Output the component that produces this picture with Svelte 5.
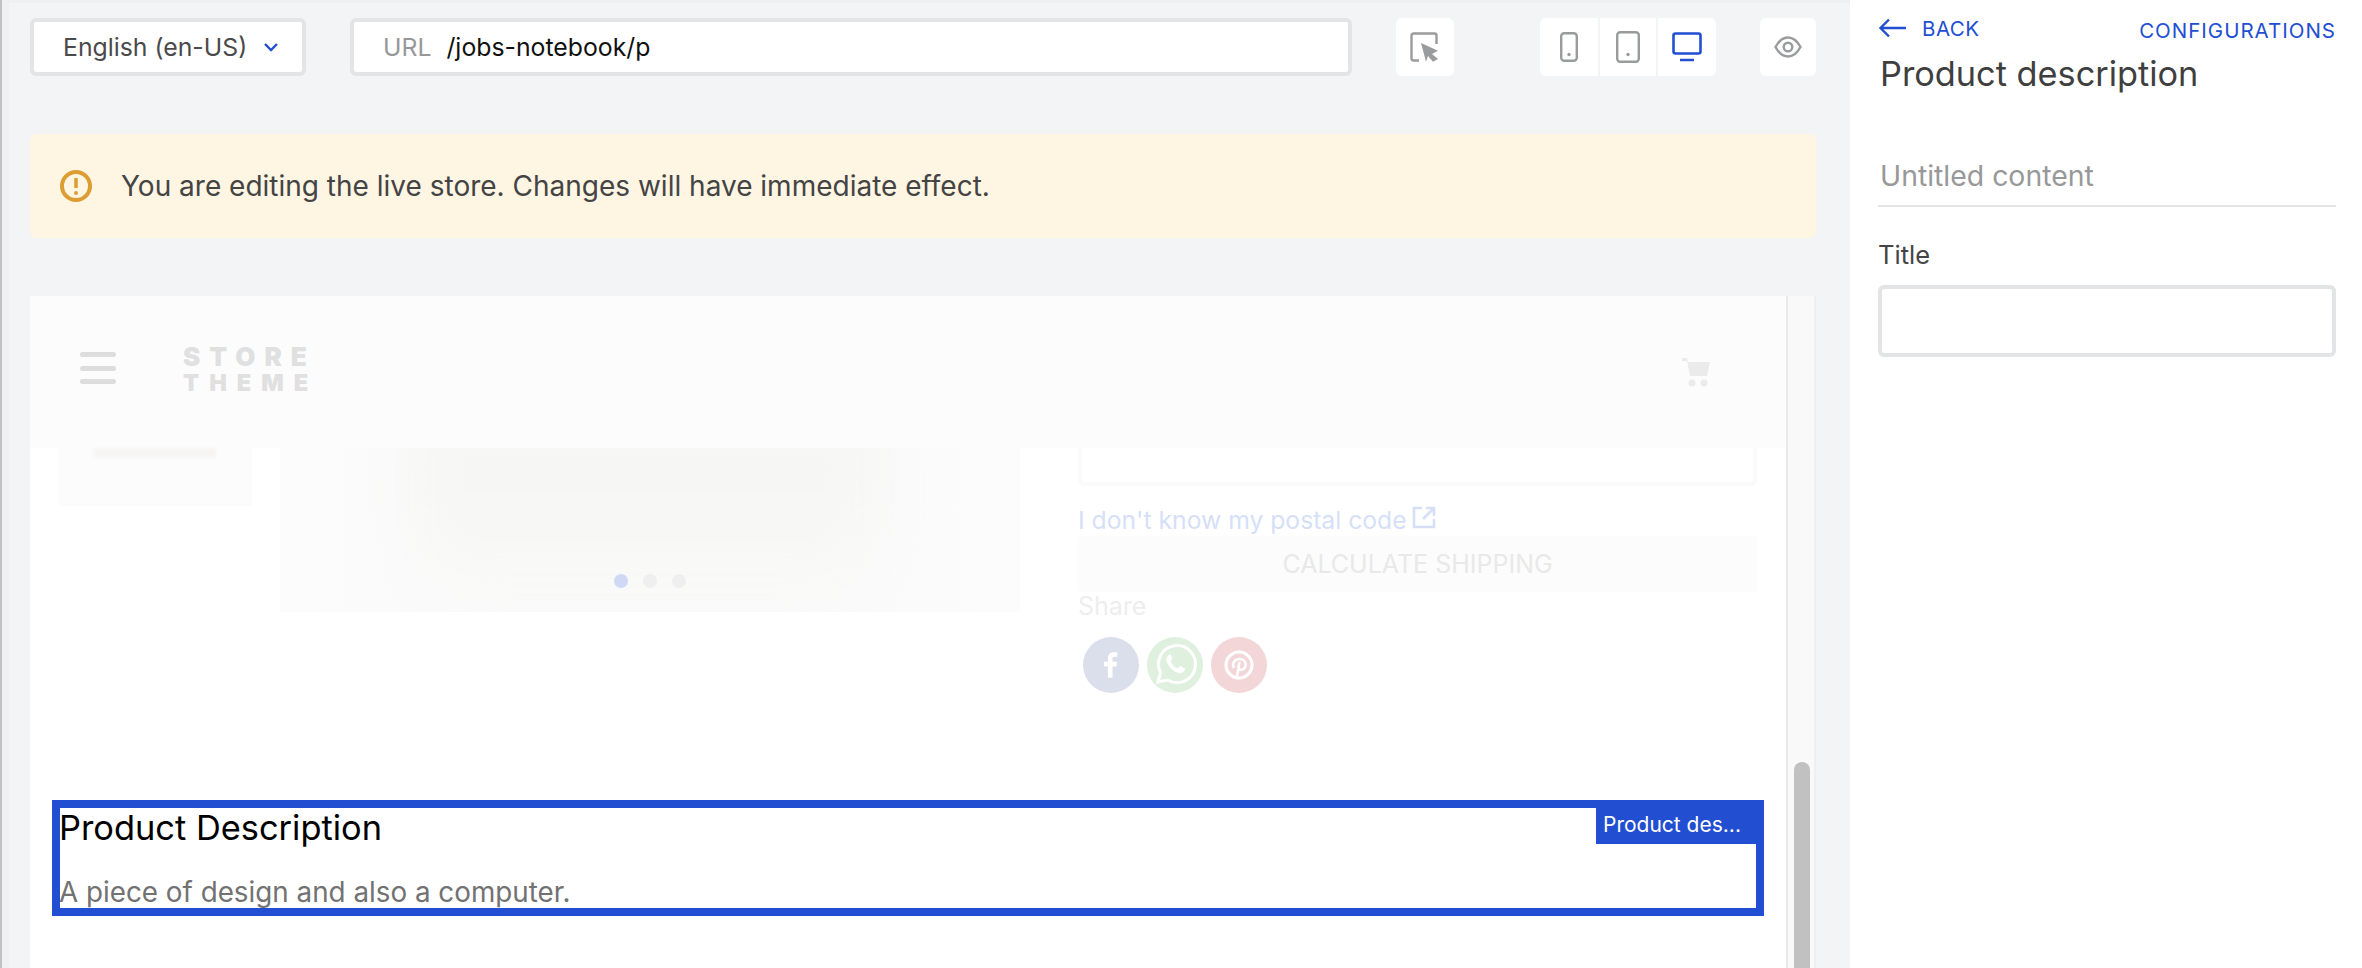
<script>
  const devices = ["phone", "tablet", "desktop"];
</script>

<div class="editor">
  <main class="workspace">
    <div class="toolbar">
      <div class="field lang">
        <span>English (en-US)</span>
        <svg width="16" height="10" viewBox="0 0 16 10"><path d="M2 2l6 6 6-6" fill="none" stroke="#224ed2" stroke-width="2.4" /></svg>
      </div>
      <div class="field url">
        <span class="url-label">URL</span>
        <span class="url-value">/jobs-notebook/p</span>
      </div>
      <button class="tool pick" aria-label="pick">
        <svg width="32" height="32" viewBox="0 0 32 32">
          <path d="M10 29.500H4.500a2 2 0 0 1-2-2V4.500a2 2 0 0 1 2-2h21a2 2 0 0 1 2 2V13" fill="none" stroke="#9a9b9c" stroke-width="2.400" />
          <path d="M12 12l17 7.700-6 3.300 6 5-5 2.700-5-5.700-2 5.700z" fill="#9a9b9c" />
        </svg>
      </button>
      <div class="device-group">
        {#each devices as d}
          <button class="tool device" aria-label={d}>
            {#if d === "phone"}
              <svg width="18" height="30" viewBox="0 0 18 30"><rect x="1.200" y="1.200" width="15.600" height="27.600" rx="3" fill="none" stroke="#9a9b9c" stroke-width="2.400" /><circle cx="9" cy="22.500" r="1.700" fill="#9a9b9c" /></svg>
            {:else if d === "tablet"}
              <svg width="24" height="32" viewBox="0 0 24 32"><rect x="1.200" y="1.200" width="21.600" height="29.600" rx="3" fill="none" stroke="#9a9b9c" stroke-width="2.400" /><circle cx="12" cy="23.500" r="1.700" fill="#9a9b9c" /></svg>
            {:else}
              <svg width="30" height="30" viewBox="0 0 30 30"><rect x="1.500" y="1.500" width="27" height="20" rx="2" fill="none" stroke="#224ed2" stroke-width="2.600" /><path d="M8 28h14" stroke="#224ed2" stroke-width="2.600" /></svg>
            {/if}
          </button>
        {/each}
      </div>
      <button class="tool eye" aria-label="preview">
        <svg width="28" height="22" viewBox="0 0 28 22"><path d="M1.500 11C5 4.500 9 1.500 14 1.500S23 4.500 26.500 11C23 17.500 19 20.500 14 20.500S5 17.500 1.500 11z" fill="none" stroke="#9a9b9c" stroke-width="2.400" /><circle cx="14" cy="11" r="4.300" fill="none" stroke="#9a9b9c" stroke-width="2.400" /></svg>
      </button>
    </div>

    <div class="warning">
      <svg width="32" height="32" viewBox="0 0 32 32"><circle cx="16" cy="16" r="14" fill="none" stroke="#dd9d33" stroke-width="4" /><path d="M16 8v10" stroke="#dd9d33" stroke-width="3.500" /><circle cx="16" cy="23" r="2" fill="#dd9d33" /></svg>
      <span>You are editing the live store. Changes will have immediate effect.</span>
    </div>

    <div class="frame">
      <div class="page">
        <header class="store-header">
          <div class="burger"><i></i><i></i><i></i></div>
          <div class="logo"><span>STORE</span><span class="theme">THEME</span></div>
          <svg class="cart" width="28" height="30" viewBox="0 0 28 30"><path d="M0 1h5l1 4h22l-3 14H8L5 4H0z" fill="#ebebeb" /><circle cx="10" cy="26" r="3.500" fill="#ebebeb" /><circle cx="22" cy="26" r="3.500" fill="#ebebeb" /></svg>
        </header>

        <section class="product">
          <div class="gallery">
            <div class="thumb"><div class="thumb-line"></div></div>
            <div class="photo">
              <div class="laptop"></div>
              <div class="dots"><i class="on"></i><i></i><i></i></div>
            </div>
          </div>
          <div class="details">
            <div class="postal"></div>
            <a class="postal-link" href="#top">
              <span>I don't know my postal code</span>
              <svg width="24" height="23" viewBox="0 0 24 23"><path d="M10 2H2v19h20v-8M14 2h8v8M22 2L11 13" fill="none" stroke="#d6dff8" stroke-width="2.600" /></svg>
            </a>
            <div class="calc">CALCULATE SHIPPING</div>
            <div class="share">Share</div>
            <div class="socials">
              <span class="social fb">
                <svg width="56" height="56" viewBox="0 0 56 56"><path transform="translate(5.100 5.600) scale(.8)" d="M30.500 44V30h5l.8-6h-5.800v-3.500c0-1.700.6-2.800 3-2.800h3v-5.300c-.6-.1-2.400-.2-4.400-.2-4.400 0-7.400 2.600-7.400 7.500V24h-5v6h5v14z" fill="#fff" /></svg>
              </span>
              <span class="social wa">
                <svg width="56" height="56" viewBox="0 0 56 56">
                  <path d="M11 45l2.500-9.500A18.500 18.500 0 1 1 20.500 43z" fill="none" stroke="#fff" stroke-width="3" />
                  <path d="M22 18c-2 1-3 3-2.500 5.500 1.500 6 6.500 11 12 12.500 2.500.6 5-.5 6-2.500l.5-2-5-2.500-2 2.500c-3-1-6-4-7.500-7.500l2-2.200-2-4.500z" fill="#fff" />
                </svg>
              </span>
              <span class="social pin">
                <svg width="56" height="56" viewBox="0 0 56 56">
                  <circle cx="28" cy="28" r="13" fill="none" stroke="#fff" stroke-width="3.200" />
                  <path d="M23 31c-2.500-4.500 1-9 5.500-9 4.300 0 6.800 3 6 7-.7 3-4.300 5-6.500 3M28.500 25l-3 17" fill="none" stroke="#fff" stroke-width="2.600" />
                </svg>
              </span>
            </div>
          </div>
        </section>

        <section class="selection">
          <div class="tag">Product des...</div>
          <h2>Product Description</h2>
          <p>A piece of design and also a computer.</p>
        </section>
      </div>
      <div class="track"><div class="thumb-bar"></div></div>
    </div>
  </main>

  <aside class="panel">
    <div class="panel-top">
      <a class="back" href="#top">
        <svg width="28" height="20" viewBox="0 0 28 20"><path d="M28 10H3M11 1.500L2.500 10l8.500 8.500" fill="none" stroke="#224ed2" stroke-width="2.400" /></svg>
        BACK
      </a>
      <a class="config" href="#top">CONFIGURATIONS</a>
    </div>
    <h1>Product description</h1>
    <div class="content-name">Untitled content</div>
    <label for="title-input">Title</label>
    <input id="title-input" type="text" />
  </aside>
</div>

<style>
  :global(body) {
    margin: 0;
    background: #f3f4f6;
    overflow: hidden;
  }

  .editor {
    display: flex;
    width: 2362px;
    height: 968px;
    overflow: hidden;
    font-family: Inter, "Liberation Sans", sans-serif;
    color: #444445;
  }

  .workspace {
    width: 1850px;
    box-sizing: border-box;
    padding: 18px 34px 0 30px;
    background: linear-gradient(#eff0f2, #eff0f2) top / 100% 3px no-repeat, #f3f4f6;
    box-shadow: inset 2px 0 0 #c0c1c3, inset 9px 0 0 #eef0f2;
  }

  .toolbar {
    display: flex;
    align-items: center;
    height: 58px;
  }

  .field {
    box-sizing: border-box;
    height: 58px;
    display: flex;
    align-items: center;
    background: #fff;
    border: 4px solid #e3e4e6;
    border-radius: 6px;
    font-size: 24.800px;
  }

  .lang {
    width: 276px;
    padding-left: 29px;
    gap: 16px;
    color: #4a4a4b;
  }

  .url {
    width: 1002px;
    margin-left: 44px;
    padding-left: 29px;
    gap: 15px;
  }

  .url-label {
    color: #979899;
  }

  .url-value {
    color: #111;
  }

  .tool {
    border: 0;
    padding: 0;
    height: 58px;
    background: #fff;
    display: flex;
    align-items: center;
    justify-content: center;
  }

  .pick {
    width: 58px;
    margin-left: 44px;
    border-radius: 6px;
  }

  .device-group {
    display: grid;
    grid-template-columns: 58px 56px 58px;
    gap: 2px;
    margin-left: 86px;
    border-radius: 6px;
    overflow: hidden;
  }

  .eye {
    width: 56px;
    margin-left: 44px;
    border-radius: 6px;
  }

  .warning {
    height: 104px;
    margin-top: 58px;
    padding-left: 30px;
    display: flex;
    align-items: center;
    gap: 29px;
    background: #fef5e3;
    border-radius: 6px;
    font-size: 28px;
  }

  .frame {
    display: flex;
    height: 672px;
    margin-top: 58px;
    background: #fff;
  }

  .page {
    width: 1758px;
    box-sizing: border-box;
    border-right: 2px solid #e9e9ea;
    overflow: hidden;
  }

  .track {
    flex: 1;
    background: #f9f9f9;
    padding: 466px 0 0 6px;
    border-right: 2px solid #eeeff0;
  }

  .thumb-bar {
    width: 16px;
    height: 300px;
    border-radius: 8px 8px 0 0;
    background: #c1c1c1;
  }

  .store-header {
    height: 152px;
    box-sizing: border-box;
    padding: 48px 76px 0 50px;
    display: flex;
    align-items: flex-start;
    background: #fcfcfc;
  }

  .burger {
    width: 36px;
    display: flex;
    flex-direction: column;
    gap: 8.500px;
    padding-top: 8px;
  }

  .burger i {
    height: 5px;
    border-radius: 3px;
    background: #dddddd;
  }

  .logo {
    display: flex;
    flex-direction: column;
    margin-left: 67px;
    font-weight: 900;
    font-size: 26px;
    line-height: 26px;
    letter-spacing: 9px;
    color: #e0e0e0;
    width: 132px;
  }

  .theme {
    font-size: 23.500px;
    letter-spacing: 10px;
  }

  .cart {
    margin-left: auto;
    margin-top: 13px;
  }

  .product {
    display: flex;
    height: 352px;
  }

  .gallery {
    display: flex;
    align-items: flex-start;
    margin-left: 28px;
    width: 1020px;
  }

  .thumb {
    width: 194px;
    height: 58px;
    background: #fcfcfc;
    display: flex;
    justify-content: center;
  }

  .thumb-line {
    width: 122px;
    height: 10px;
    background: #f6f5f4;
    filter: blur(1.500px);
  }

  .photo {
    position: relative;
    width: 740px;
    height: 164px;
    margin-left: 28px;
    background: linear-gradient(90deg, #fcfcfc, #fafafa 25%, #fafafa 75%, #fcfcfc);
    overflow: hidden;
    display: flex;
    justify-content: center;
    padding-top: 126px;
    box-sizing: border-box;
  }

  .laptop {
    position: absolute;
    left: 130px;
    top: -30px;
    width: 470px;
    height: 175px;
    border-radius: 0 0 60px 60px;
    background: linear-gradient(#f5f5f4, #f9f9f8);
    filter: blur(22px);
  }

  .dots {
    position: relative;
    display: flex;
    gap: 15px;
  }

  .dots i {
    width: 14px;
    height: 14px;
    border-radius: 50%;
    background: #efefef;
  }

  .dots i.on {
    background: #cfd9f5;
  }

  .details {
    width: 679px;
  }

  .postal {
    height: 38px;
    box-sizing: border-box;
    border: 4px solid #fafafa;
    border-top: 0;
    border-radius: 0 0 6px 6px;
  }

  .postal-link {
    display: flex;
    align-items: center;
    gap: 5px;
    height: 28px;
    margin-bottom: 2px;
    padding-top: 20px;
    font-size: 24.700px;
    color: #d6dff8;
    text-decoration: none;
  }

  .postal-link svg {
    margin-top: -6px;
  }

  .calc {
    height: 56px;
    line-height: 56px;
    text-align: center;
    background: #fcfcfc;
    border-radius: 4px;
    font-size: 25px;
    color: #e9e9e9;
  }

  .share {
    height: 38px;
    font-size: 25px;
    line-height: 28px;
    color: #eeeeee;
  }

  .socials {
    display: flex;
    gap: 8px;
    padding: 7px 0 0 5px;
  }

  .social {
    width: 56px;
    height: 56px;
    border-radius: 50%;
    display: block;
  }

  .fb {
    background: #dbdfeb;
  }

  .wa {
    background: #dff0df;
  }

  .pin {
    background: #f2d6d8;
  }

  .selection {
    position: relative;
    box-sizing: border-box;
    width: 1712px;
    height: 116px;
    margin-left: 22px;
    border: 8px solid #224ed2;
    overflow: hidden;
  }

  .tag {
    position: absolute;
    top: 0;
    right: 0;
    width: 160px;
    height: 36px;
    box-sizing: border-box;
    padding-left: 7px;
    line-height: 33px;
    background: #224ed2;
    color: #fff;
    font-size: 21px;
  }

  .selection h2 {
    margin: 0 0 0 -1px;
    font-weight: 400;
    font-size: 34.400px;
    line-height: 40px;
    color: #000;
  }

  .selection p {
    margin: 24px 0 0 -1px;
    font-size: 27.800px;
    line-height: 40px;
    color: #727272;
  }

  .panel {
    flex: 1;
    box-sizing: border-box;
    padding: 0 26px 0 28px;
    background: #fff;
  }

  .panel-top {
    display: flex;
    justify-content: space-between;
    height: 52px;
    font-size: 20.500px;
    letter-spacing: .5px;
  }

  .back {
    display: flex;
    align-items: center;
    gap: 16px;
    height: 56px;
    color: #224ed2;
    text-decoration: none;
  }

  .config {
    color: #224ed2;
    text-decoration: none;
    line-height: 62px;
    letter-spacing: 1px;
  }

  .panel h1 {
    margin: 0;
    padding-left: 2px;
    font-weight: 400;
    font-size: 34.300px;
    line-height: 44px;
    color: #3f3f40;
  }

  .content-name {
    margin-top: 51px;
    height: 60px;
    box-sizing: border-box;
    padding-left: 2px;
    border-bottom: 2px solid #e3e4e6;
    font-size: 28.400px;
    line-height: 58px;
    color: #979899;
  }

  label {
    display: block;
    margin-top: 33px;
    font-size: 25.500px;
    line-height: 30px;
  }

  input {
    display: block;
    width: 100%;
    height: 72px;
    margin-top: 15px;
    box-sizing: border-box;
    background: #fff;
    border: 4px solid #e3e4e6;
    border-radius: 6px;
  }
</style>
